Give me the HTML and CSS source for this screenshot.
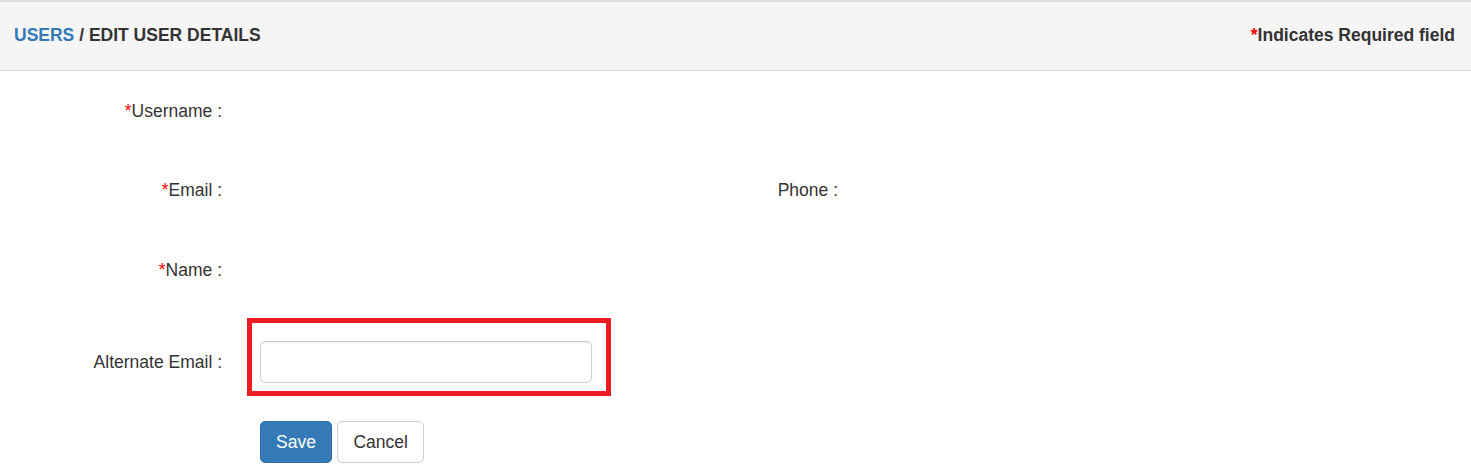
FILE: index.html
```html
<!DOCTYPE html>
<html lang="en">
<head>
  <meta charset="UTF-8">
  <meta name="viewport" content="width=device-width, initial-scale=1.0">
  <title>Edit User Details</title>
  <link rel="stylesheet" href="styles.css">
</head>
<body>
  <div class="page-head">
    <div class="crumbs"><a href="#" class="crumb-link">USERS</a> / EDIT USER DETAILS</div>
    <div class="req-note"><span class="req">*</span>Indicates Required field</div>
  </div>
  <form class="user-form">
    <div class="form-row">
      <label class="form-label"><span class="req">*</span>Username :</label>
    </div>
    <div class="form-row">
      <label class="form-label"><span class="req">*</span>Email :</label>
      <div class="form-value"></div>
      <label class="form-label form-label-wide">Phone :</label>
    </div>
    <div class="form-row form-row-name">
      <label class="form-label"><span class="req">*</span>Name :</label>
    </div>
    <div class="form-row form-row-input">
      <label class="form-label" for="altEmail">Alternate Email :</label>
      <div class="form-value highlight">
        <input type="text" id="altEmail" class="form-control">
      </div>
    </div>
    <div class="form-actions">
      <button type="button" class="btn btn-primary">Save</button>
      <button type="button" class="btn btn-default">Cancel</button>
    </div>
  </form>
</body>
</html>
```

FILE: styles.css
```css
* {
  margin: 0;
  padding: 0;
  box-sizing: border-box;
}
body {
  font-family: "Liberation Sans", Arial, sans-serif;
  font-size: 17.5px;
  color: #333;
  background: #fff;
}
.req {
  color: #f00;
}
.page-head {
  height: 71px;
  display: flex;
  align-items: center;
  justify-content: space-between;
  padding: 0 16px 2px 14px;
  background: #f5f5f5;
  border-top: 2px solid #ddd;
  border-bottom: 1px solid #ddd;
  font-weight: 700;
}
.crumb-link {
  color: #337ab7;
  text-decoration: none;
}
.form-row {
  display: flex;
  align-items: center;
  height: 79px;
}
.form-row:first-child {
  height: 80px;
}
.form-row-name {
  height: 81px;
}
.form-label {
  width: 222px;
  text-align: right;
  flex-shrink: 0;
}
.form-label-wide {
  width: 246px;
}
.form-value {
  width: 332px;
  margin-left: 38px;
  flex-shrink: 0;
}
.form-row-input {
  height: 42px;
  margin-top: 30px;
}
.highlight {
  position: relative;
}
.highlight::after {
  content: "";
  position: absolute;
  left: -13px;
  top: -23px;
  right: -19px;
  bottom: -13px;
  border: 5px solid #ed1c24;
  pointer-events: none;
}
.form-control {
  display: block;
  width: 100%;
  height: 42px;
  padding: 7px 15px;
  border: 1px solid #ccc;
  border-radius: 5px;
  box-shadow: inset 0 1px 1px rgba(0, 0, 0, .075);
  font: inherit;
  color: #555;
}
.form-actions {
  display: flex;
  gap: 5px;
  margin: 38px 0 0 260px;
}
.btn {
  height: 42px;
  padding: 0 15px;
  border: 1px solid transparent;
  border-radius: 5px;
  font: inherit;
  cursor: pointer;
}
.btn-primary {
  color: #fff;
  background: #337ab7;
  border-color: #2e6da4;
}
.btn-default {
  padding: 0 15.5px;
  color: #333;
  background: #fff;
  border-color: #ccc;
}
```
